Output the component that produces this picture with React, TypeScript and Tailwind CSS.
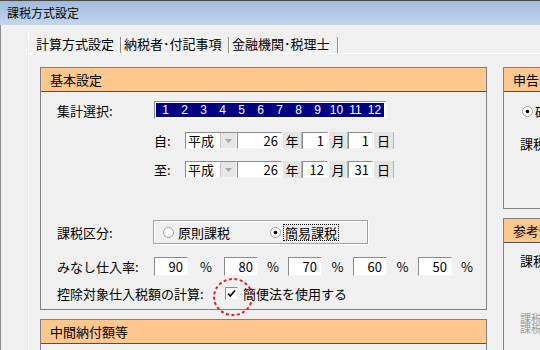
import React from 'react';

const sunken = "bg-white border border-t-[#8c8c8c] border-l-[#8c8c8c] border-b-[#f4f4f4] border-r-[#f4f4f4]";

const Radio: React.FC<{ checked?: boolean }> = ({ checked }) => (
    <svg width="11" height="11" viewBox="0 0 11 11" className="shrink-0">
        <circle cx="5.5" cy="5.5" r="5" fill="white" stroke="#a0a0a0" />
        {checked && <circle cx="5.5" cy="5.5" r="1.8" fill="black" />}
    </svg>
);

const UnitBox: React.FC<{ label: string; w: string }> = ({ label, w }) => (
    <div className={`${w} h-full bg-[#e4e4e4] border-l border-white border-r border-r-[#b4b4b4] flex items-center justify-center`}>
        {label}
    </div>
);

const DateRow: React.FC<{ head: string; month: string; day: string }> = ({ head, month, day }) => (
    <div className="flex items-center h-[17px] pl-[16px] text-[13px] leading-none">
        <div className="w-[97px]" />
        <div className="w-[31px]">{head}</div>
        <div className={`${sunken} w-[52px] h-full flex items-center`}>
            <span className="flex-1 pl-[2px]">平成</span>
            <div className="w-[16px] h-full bg-[#e6e6e6] border-l border-[#c8c8c8] flex items-center justify-center">
                <svg width="7" height="4" viewBox="0 0 7 4"><path d="M0 0h7L3.5 4z" fill="#a8a8a8" /></svg>
            </div>
        </div>
        <div className={`${sunken} w-[45px] h-full flex items-center justify-end pr-[3px]`}>26</div>
        <UnitBox label="年" w="w-[20px]" />
        <div className={`${sunken} w-[26px] h-full flex items-center justify-end pr-[3px]`}>{month}</div>
        <UnitBox label="月" w="w-[20px]" />
        <div className={`${sunken} w-[25px] h-full flex items-center justify-end pr-[3px]`}>{day}</div>
        <UnitBox label="日" w="w-[21px]" />
    </div>
);

const rates = [
    { v: '90', pw: 'w-[36px]' },
    { v: '80', pw: 'w-[30px]' },
    { v: '70', pw: 'w-[31px]' },
    { v: '60', pw: 'w-[31px]' },
    { v: '50', pw: 'w-[30px]' },
];

const App: React.FC = () => {
    return (
        <div className="w-[540px] h-[350px] overflow-hidden bg-[#f0f0f0] text-black font-['Noto_Sans_CJK_JP',sans-serif] flex flex-col">
            <div className="h-[25px] shrink-0 border-t border-[#4a4a4a] bg-linear-to-b from-[#a0bbdb] to-[#c4d7ed] flex items-center pl-[7px] text-[12px] leading-none">
                課税方式設定
            </div>

            <div className="flex-1 min-h-0 border-l border-[#8c8c8c] pl-[27px] pt-[8px] flex flex-col">
                {/* tabs */}
                <div className="h-[20px] shrink-0 flex text-[13px] leading-none">
                    <div className="w-[92px] pl-[7px] flex items-center border-l border-white">計算方式設定</div>
                    <div className="w-[2px] mt-[4px] border-l border-[#8c8c8c] border-r border-r-white" />
                    <div className="w-[106px] pl-[2px] flex items-center">納税者･付記事項</div>
                    <div className="w-[2px] mt-[4px] border-l border-[#8c8c8c] border-r border-r-white" />
                    <div className="w-[107px] pl-[2px] flex items-center">金融機関･税理士</div>
                    <div className="w-[2px] mt-[4px] border-l border-[#8c8c8c] border-r border-r-white" />
                </div>

                {/* panel */}
                <div className="flex-1 min-h-0 border-t border-l border-white pl-[11px] pt-[13px] flex gap-[16px]">
                    <div className="w-[447px] shrink-0 flex flex-col">
                        <div className="h-[243px] shrink-0 border border-[#808080] relative flex flex-col text-[13px] leading-none">
                            <div className="h-[24px] shrink-0 bg-[#fdc78e] border-b border-[#505050] pl-[9px] flex items-center">基本設定</div>

                            <div className="mt-[9px] h-[18px] pl-[16px] flex items-center">
                                <div className="w-[97px]">集計選択:</div>
                                <div className="border border-t-[#8c8c8c] border-l-[#8c8c8c] border-b-white border-r-white p-[1px] bg-white">
                                    <div className="w-[228px] h-[14px] bg-[#000080] flex text-white text-[12px] font-['Liberation_Sans',sans-serif]">
                                        {['1', '2', '3', '4', '5', '6', '7', '8', '9', '10', '11', '12'].map(m => (
                                            <span key={m} className="w-[19px] h-full flex items-center justify-center">{m}</span>
                                        ))}
                                    </div>
                                </div>
                            </div>

                            <div className="mt-[13px]"><DateRow head="自:" month="1" day="1" /></div>
                            <div className="mt-[12px]"><DateRow head="至:" month="12" day="31" /></div>

                            <div className="mt-[42px] h-[24px] pl-[16px] flex items-center">
                                <div className="w-[96px]">課税区分:</div>
                                <div className="w-[215px] h-full border border-[#a0a0a0] shadow-[inset_1px_1px_0_white,1px_1px_0_white] flex items-center pl-[9px]">
                                    <Radio />
                                    <span className="ml-[4px]">原則課税</span>
                                    <span className="ml-[40px]"><Radio checked /></span>
                                    <span className="ml-[2px] border border-dotted border-black px-[1px] py-[1px]">簡易課税</span>
                                </div>
                            </div>

                            <div className="mt-[13px] h-[19px] pl-[16px] flex items-center">
                                <div className="w-[97px]">みなし仕入率:</div>
                                {rates.map(r => (
                                    <React.Fragment key={r.v}>
                                        <div className={`${sunken} w-[34px] h-full flex items-center justify-end pr-[4px]`}>{r.v}</div>
                                        <div className={`${r.pw} text-center`}>%</div>
                                    </React.Fragment>
                                ))}
                            </div>

                            <div className="mt-[10px] h-[15px] pl-[16px] flex items-center">
                                <div className="w-[168px]">控除対象仕入税額の計算:</div>
                                <div className={`${sunken} w-[13px] h-[13px] flex items-center justify-center`}>
                                    <svg width="9" height="9" viewBox="0 0 9 9"><path d="M1 4.5l2.3 2.5L8 1.5" fill="none" stroke="black" strokeWidth="1.8" /></svg>
                                </div>
                                <span className="ml-[5px]">簡便法を使用する</span>
                            </div>

                            <svg className="absolute left-[171px] top-[209px] pointer-events-none" width="42" height="40" viewBox="0 0 42 40">
                                <ellipse cx="21" cy="20" rx="19" ry="18" fill="none" stroke="#e02626" strokeWidth="2" strokeDasharray="3 2.5" />
                            </svg>
                        </div>

                        <div className="mt-[9px] flex-1 border border-b-0 border-[#808080] flex flex-col text-[13px] leading-none">
                            <div className="h-[24px] shrink-0 bg-[#fdc78e] border-b border-[#505050] pl-[9px] flex items-center">中間納付額等</div>
                        </div>
                    </div>

                    <div className="w-[200px] shrink-0 flex flex-col text-[13px] leading-none">
                        <div className="h-[142px] shrink-0 border border-[#808080] flex flex-col">
                            <div className="h-[24px] shrink-0 bg-[#fdc78e] border-b border-[#505050] pl-[9px] flex items-center">申告区分</div>
                            <div className="mt-[13px] pl-[18px] flex items-center h-[13px]">
                                <Radio checked />
                                <span className="ml-[2px]">確定申告</span>
                            </div>
                            <div className="mt-[19px] pl-[16px]">課税期間</div>
                        </div>
                        <div className="mt-[9px] flex-1 border border-b-0 border-[#808080] flex flex-col">
                            <div className="h-[24px] shrink-0 bg-[#fdc78e] border-b border-[#505050] pl-[9px] flex items-center">参考情報</div>
                            <div className="mt-[11px] pl-[16px]">課税売上高</div>
                            <div className="mt-[46px] pl-[16px] text-[11px] leading-[10px] text-[#a0a0a0]">
                                <div>課税売上割合</div>
                                <div>課税仕入高</div>
                            </div>
                        </div>
                    </div>
                </div>
            </div>
        </div>
    );
};

export default App;
